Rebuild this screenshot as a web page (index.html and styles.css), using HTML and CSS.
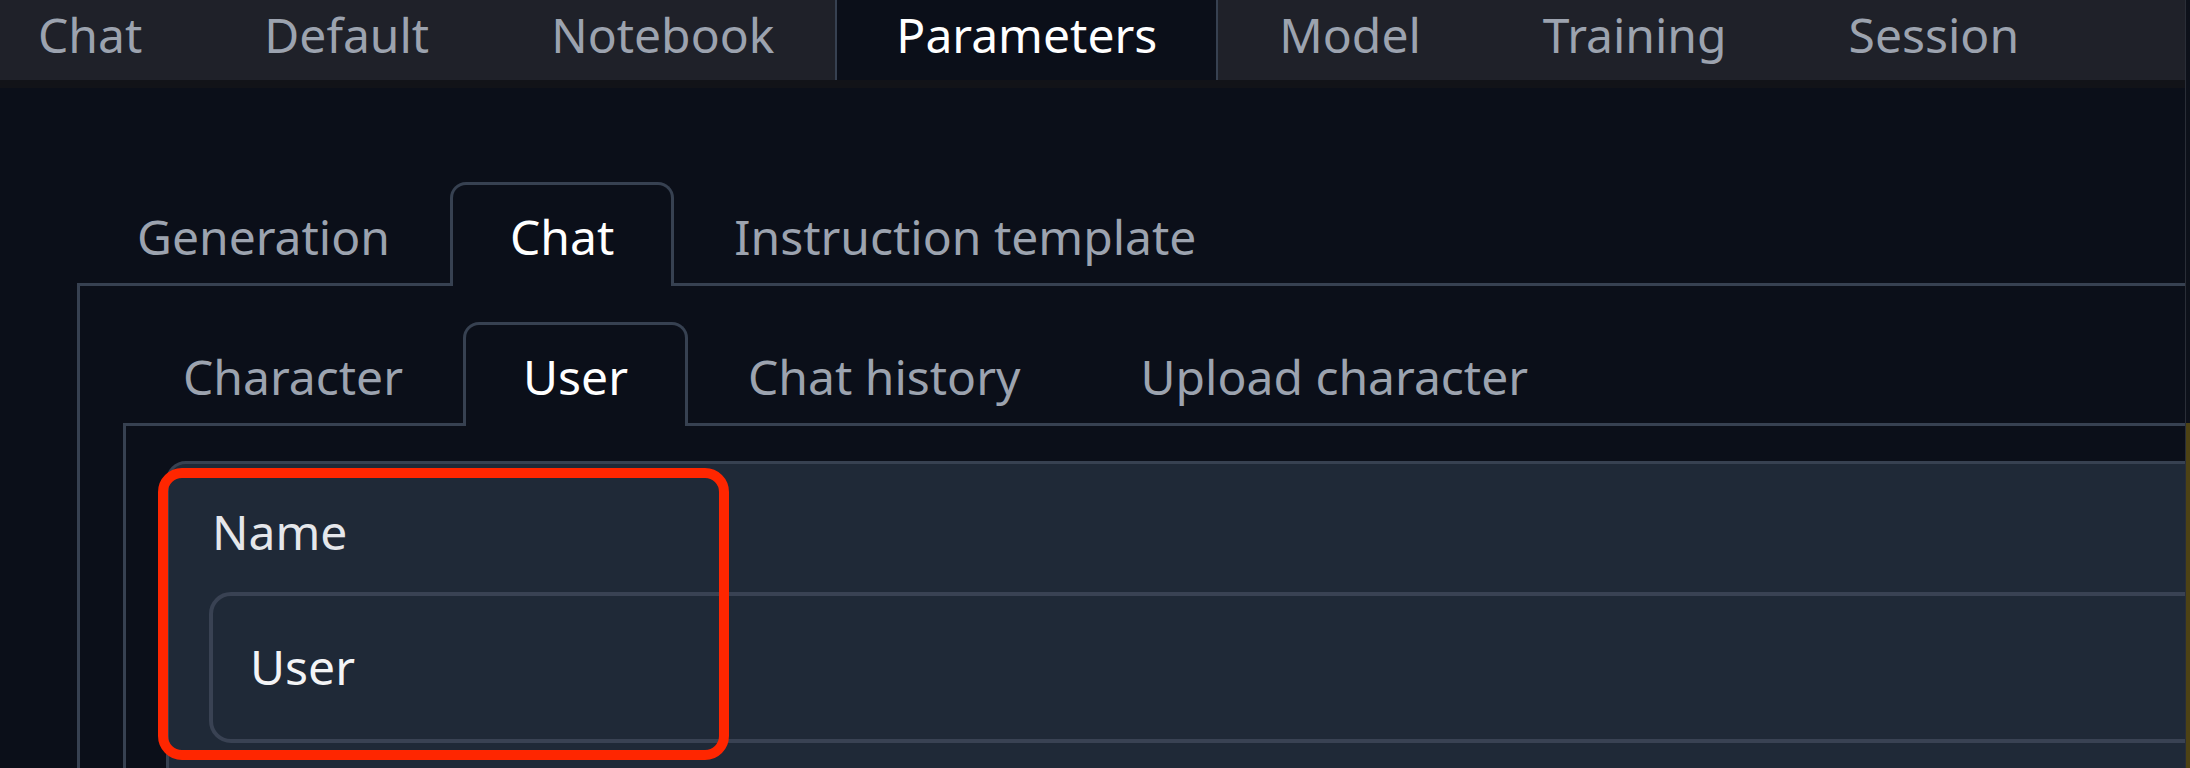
FILE: index.html
```html
<!DOCTYPE html>
<html lang="en">
<head>
<meta charset="utf-8">
<title>Parameters - User</title>
<link rel="stylesheet" href="styles.css">
</head>
<body>
<div class="screen">
  <div class="window">
    <nav class="topbar">
      <div class="toptabs">
        <div class="toptab">Chat</div>
        <div class="toptab">Default</div>
        <div class="toptab">Notebook</div>
        <div class="toptab active">Parameters</div>
        <div class="toptab">Model</div>
        <div class="toptab">Training</div>
        <div class="toptab">Session</div>
      </div>
    </nav>
    <main class="content">
      <div class="tablist">
        <div class="tab">Generation</div>
        <div class="tab active">Chat</div>
        <div class="tab">Instruction template</div>
      </div>
      <div class="panel">
        <div class="tablist">
          <div class="tab">Character</div>
          <div class="tab active">User</div>
          <div class="tab">Chat history</div>
          <div class="tab">Upload character</div>
        </div>
        <div class="panel inner">
          <div class="block">
            <label class="label">Name</label>
            <div class="input">User</div>
          </div>
        </div>
      </div>
    </main>
    <div class="annot"></div>
  </div>
  <div class="wall"></div>
</div>
</body>
</html>
```
FILE: styles.css
```css
* { box-sizing: border-box; }
html, body { margin: 0; padding: 0; }
body {
  background: #0b0f19;
  font-family: "Noto Sans", "Open Sans", sans-serif;
  overflow: hidden;
}
.screen {
  display: flex;
  width: 2190px;
  height: 768px;
}
.window {
  position: relative;
  width: 2186px;
  height: 768px;
  overflow: hidden;
  background: #0b0f19;
  border-right: 1px solid #2a2e37;
}
.wall {
  flex: 1;
  background: linear-gradient(#0d111a 0 423px, #4d4214 423px 100%);
}

/* top navigation */
.topbar {
  height: 88px;
  background: #1f2129;
  border-bottom: 8px solid #121318;
  display: flex;
}
.toptabs {
  display: flex;
  margin-left: -22px;
}
.toptab {
  height: 80px;
  padding: 0 61px 11px;
  line-height: 69px;
  font-size: 48px;
  color: #9ca3af;
  white-space: nowrap;
}
.toptab:first-child {
  padding-left: 60px;
}
.toptab.active {
  background: #0b0f19;
  color: #ffffff;
  border-left: 2px solid #374151;
  border-right: 2px solid #374151;
  padding: 0 59px 11px;
}

/* nested tabs */
.content {
  padding: 94px 0 0 77px;
}
.tablist {
  display: flex;
}
.tab {
  height: 101px;
  padding: 5px 57px 0;
  line-height: 93px;
  font-size: 48px;
  color: #9ca3af;
  border: 3px solid transparent;
  border-bottom: 0;
  border-radius: 16px 16px 0 0;
  white-space: nowrap;
}
.tab.active {
  color: #ffffff;
  border-color: #374151;
  background: #0b0f19;
  height: 104px;
  margin-bottom: -3px;
  position: relative;
  z-index: 1;
}
.panel {
  border-top: 3px solid #374151;
  border-left: 3px solid #374151;
  padding: 36px 0 0 43px;
  margin-right: -120px;
}
.panel.inner {
  padding: 35px 0 0 40px;
}

/* form block */
.block {
  background: #1f2937;
  border: 3px solid #374151;
  border-radius: 20px;
  padding: 34px 0 40px 40px;
}
.label {
  display: block;
  font-size: 48px;
  line-height: 67px;
  color: #e5e7eb;
  margin: 0 0 27px 3px;
}
.input {
  border: 4px solid #394253;
  border-radius: 22px;
  padding: 37px 37px 39px;
  font-size: 48px;
  line-height: 67px;
  color: #f3f4f6;
  background: #1f2937;
}

/* annotation overlay */
.annot {
  position: absolute;
  left: 158px;
  top: 468px;
  width: 571px;
  height: 292px;
  border: 10px solid #ff2600;
  border-radius: 24px;
  z-index: 2;
}
```
